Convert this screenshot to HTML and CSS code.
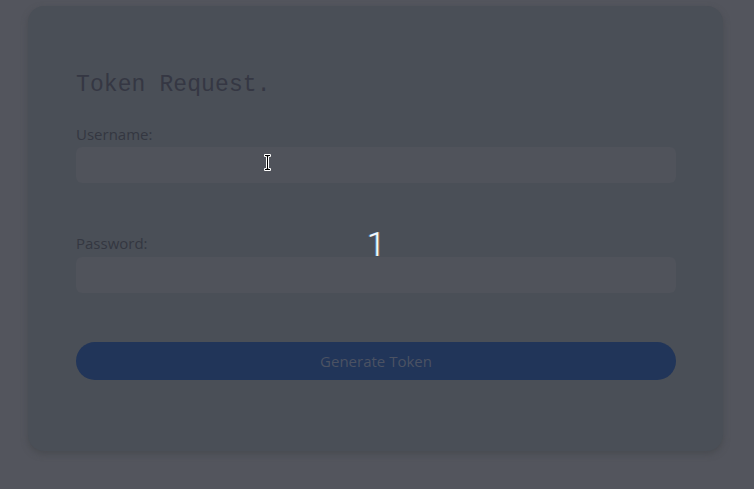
FILE: index.html
```html
<!DOCTYPE html>
<html>
<head>
<meta charset="utf-8">
<link rel="stylesheet" href="styles.css">
</head>
<body>
<div class="card">
  <h1 class="title">Token Request.</h1>
  <form class="form">
    <label class="label">Username:</label>
    <div class="input"></div>
    <label class="label label-pw">Password:</label>
    <div class="input"></div>
    <button type="button" class="btn">Generate Token</button>
  </form>
</div>
<div class="badge">1</div>
<svg class="cursor" width="9" height="19" viewBox="0 0 9 19">
  <path d="M1.5 1.5h6v2h-2v12h2v2h-6v-2h2v-12h-2z" fill="#000" stroke="#fff" stroke-width="1"/>
</svg>
</body>
</html>
```
FILE: styles.css
```css
html, body {
  margin: 0;
  padding: 0;
}
body {
  background: #53555d;
  width: 754px;
  height: 489px;
  overflow: hidden;
  position: relative;
  font-family: "Open Sans", "Noto Sans", sans-serif;
}
.card {
  box-sizing: border-box;
  margin: 6px 0 0 28px;
  width: 695px;
  height: 445px;
  background: #4a4f57;
  border-radius: 16px;
  padding: 64px 47px 0 48px;
  box-shadow: 0 3px 6px rgba(70, 72, 78, 0.8);
}
.title {
  margin: 0;
  font-family: "Liberation Mono", "DejaVu Sans Mono", monospace;
  font-weight: normal;
  font-size: 23px;
  line-height: 30px;
  color: #353743;
  letter-spacing: 0.1px;
}
.form {
  display: flex;
  flex-direction: column;
  margin-top: 23px;
}
.label {
  font-size: 15px;
  line-height: 22px;
  color: #343741;
}
.input {
  margin-top: 2px;
  height: 36px;
  background: #50535b;
  border-radius: 6px;
}
.label-pw {
  margin-top: 49px;
}
.label-pw + .input {
  margin-top: 3px;
}
.btn {
  margin-top: 49px;
  height: 38px;
  border: none;
  border-radius: 19px;
  background: #213559;
  color: #4b5263;
  font-family: "Open Sans", "Noto Sans", sans-serif;
  font-size: 15px;
  padding: 0;
}
.badge {
  position: absolute;
  left: 367px;
  top: 227px;
  font-family: Roboto, "Liberation Sans", sans-serif;
  font-weight: 300;
  font-size: 33px;
  line-height: 36px;
  color: #f4f8ff;
  text-shadow: -1px 0 0 rgba(120, 200, 255, 0.5), 1px 0 0 rgba(255, 200, 120, 0.4);
}
.cursor {
  position: absolute;
  left: 263px;
  top: 153px;
}
```
